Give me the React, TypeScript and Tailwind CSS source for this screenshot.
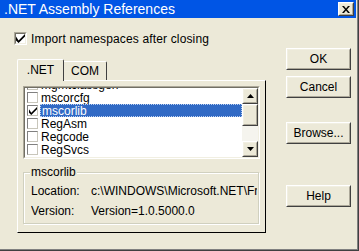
import React from "react";

function Raised({ className = "", children }: { className?: string; children?: React.ReactNode }) {
  return (
    <div className={`border-t border-l border-t-white border-l-white border-b border-r border-b-[#404040] border-r-[#404040] ${className}`}>
      <div className="w-full h-full border-t border-l border-t-[#F1EFE2] border-l-[#F1EFE2] border-b border-r border-b-[#ACA899] border-r-[#ACA899] bg-[#ECE9D8] flex items-center justify-center">
        {children}
      </div>
    </div>
  );
}

function Button({ label, className = "" }: { label: string; className?: string }) {
  return (
    <Raised className={`w-[65px] h-[22px] ${className}`}>
      <span className="leading-none">{label}</span>
    </Raised>
  );
}

function Check({ size = 13 }: { size?: number }) {
  return (
    <svg width={size === 13 ? 9 : 8} height={size === 13 ? 9 : 8} viewBox="0 0 7 7" className="block">
      <path d="M0 2 L0 5 L2 7 L7 2 L7 0 L2 5 Z" fill="#000" />
    </svg>
  );
}

function ListBox() {
  const rows = [
    { name: "mgmtclassgen", checked: false },
    { name: "mscorcfg", checked: false },
    { name: "mscorlib", checked: true, selected: true },
    { name: "RegAsm", checked: false },
    { name: "Regcode", checked: false },
    { name: "RegSvcs", checked: false },
  ];
  return (
    <div className="w-[237px] h-[73px] border-t border-l border-t-[#ACA899] border-l-[#ACA899] border-b border-r border-b-white border-r-white">
      <div className="w-full h-full border-t border-l border-t-[#716F64] border-l-[#716F64] border-b border-r border-b-[#F1EFE2] border-r-[#F1EFE2] bg-white flex">
        <div className="flex-1 overflow-hidden">
          <div className="mt-[-10px] flex flex-col">
            {rows.map((r) => (
              <div key={r.name} className="h-[13px] flex items-center pl-[2px]">
                <div className="w-[11px] h-[11px] bg-white border-t border-l border-t-[#808080] border-l-[#808080] border-b border-r border-b-[#C8C6BB] border-r-[#C8C6BB] flex items-center justify-center shrink-0">
                  {r.checked && <Check size={11} />}
                </div>
                <div
                  className={`ml-[2px] flex-1 h-[13px] flex items-center pl-[1px] whitespace-nowrap ${
                    r.selected ? "bg-[#316AC5] text-white border border-dotted border-[#BCD0F0] pl-0" : ""
                  }`}
                >
                  {r.name}
                </div>
              </div>
            ))}
          </div>
        </div>
        <div className="w-[16px] flex flex-col bg-[#F5F4EE]">
          <Raised className="w-[16px] h-[16px]">
            <svg width="7" height="4" viewBox="0 0 7 4"><path d="M3.5 0 L7 4 L0 4 Z" fill="#000" /></svg>
          </Raised>
          <Raised className="w-[16px] h-[22px]" />
          <div className="flex-1" />
          <Raised className="w-[16px] h-[16px]">
            <svg width="7" height="4" viewBox="0 0 7 4"><path d="M0 0 L7 0 L3.5 4 Z" fill="#000" /></svg>
          </Raised>
        </div>
      </div>
    </div>
  );
}

export default function App() {
  return (
    <div className="w-[359px] h-[251px] bg-[#404040] pr-px pb-px font-['Liberation_Sans',Arial,sans-serif] text-[12px] text-black overflow-hidden">
      <div className="w-full h-full bg-[#808080] pr-px pb-px">
        <div className="w-full h-full bg-[#ECE9D8] pr-px flex flex-col">
          {/* Title bar */}
          <div className="h-[18px] bg-[#0055E5] flex items-center justify-between pl-[4px] pr-[2px] shrink-0">
            <span className="text-white text-[14px] leading-none">.NET Assembly References</span>
            <Raised className="w-[16px] h-[14px]">
              <svg width="8" height="7" viewBox="0 0 8 7">
                <path d="M0 0 L2 0 L4 2.5 L6 0 L8 0 L5 3.5 L8 7 L6 7 L4 4.5 L2 7 L0 7 L3 3.5 Z" fill="#000" />
              </svg>
            </Raised>
          </div>
          {/* Body */}
          <div className="flex flex-1">
            <div className="w-[286px] pl-[14px] flex flex-col">
              <div className="mt-[14px] h-[13px] flex items-center">
                <div className="w-[13px] h-[13px] border-t border-l border-t-[#ACA899] border-l-[#ACA899] border-b border-r border-b-white border-r-white shrink-0">
                  <div className="w-full h-full border-t border-l border-t-[#716F64] border-l-[#716F64] border-b border-r border-b-[#F1EFE2] border-r-[#F1EFE2] bg-white flex items-center justify-center">
                    <Check />
                  </div>
                </div>
                <span className="ml-[4px] whitespace-nowrap tracking-[0.15px]">Import namespaces after closing</span>
              </div>
              {/* Tabs */}
              <div className="mt-[14px] ml-[3px] flex flex-col">
                <div className="flex items-end h-[21px]">
                  <div className="relative z-10 w-[47px] h-[22px] mb-[-1px] bg-[#ECE9D8] border-l border-t border-l-white border-t-white border-r border-r-[#404040] rounded-tl-[2px] rounded-tr-[2px] flex items-center justify-center pb-[1px]">
                    .NET
                  </div>
                  <div className="w-[43px] h-[19px] bg-[#ECE9D8] border-t border-t-white border-r border-r-[#404040] rounded-tr-[2px] flex items-center justify-center">
                    COM
                  </div>
                </div>
                <div className="w-[249px] h-[153px] border-l border-t border-l-white border-t-white border-r border-b border-r-black border-b-black pl-[5px] pt-[5px] flex flex-col">
                  <ListBox />
                  <div className="relative mt-[13px] w-[236px] h-[52px] border border-[#D0D0BF] shadow-[inset_1px_1px_0_#ffffff,1px_1px_0_#ffffff] pt-[8px] pl-[7px]">
                    <span className="absolute top-[-8px] left-[6px] px-[1px] bg-[#ECE9D8] leading-[14px]">mscorlib</span>
                    <div className="h-[20px] flex items-center whitespace-nowrap overflow-hidden w-[226px]">
                      <span className="w-[60px] shrink-0">Location:</span>
                      <span className="min-w-0 overflow-hidden">c:\WINDOWS\Microsoft.NET\Framework</span>
                    </div>
                    <div className="h-[20px] flex items-center whitespace-nowrap overflow-hidden w-[226px]">
                      <span className="w-[60px] shrink-0">Version:</span>
                      <span>Version=1.0.5000.0</span>
                    </div>
                  </div>
                </div>
              </div>
            </div>
            <div className="flex flex-col">
              <Button label="OK" className="mt-[30px]" />
              <Button label="Cancel" className="mt-[6px]" />
              <Button label="Browse..." className="mt-[24px]" />
              <Button label="Help" className="mt-[41px]" />
            </div>
          </div>
        </div>
      </div>
    </div>
  );
}
